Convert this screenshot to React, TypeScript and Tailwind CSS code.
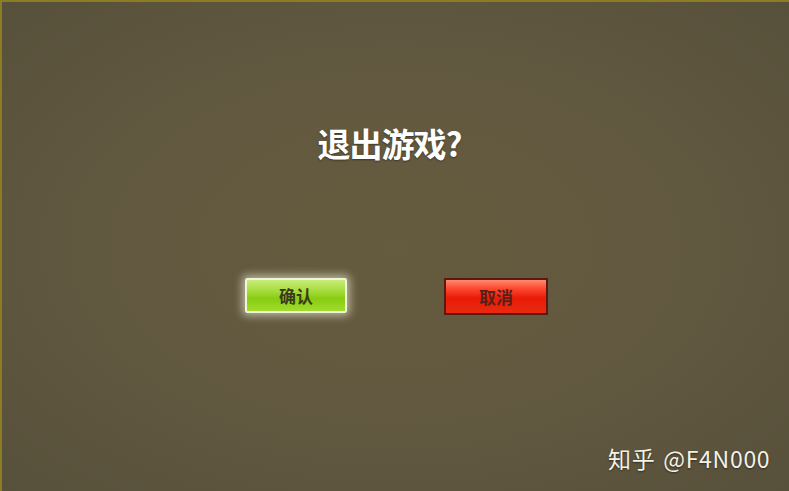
export default function App() {
  return (
    <div className="relative w-[789px] h-[491px] overflow-hidden border-t-2 border-l-2 border-[#8c7d22] bg-[radial-gradient(ellipse_at_center,#655b3e_0%,#615840_55%,#57503a_100%)] font-['Noto_Sans_CJK_SC',sans-serif]">
      <div className="flex flex-col items-center pt-[120px]">
        <h1 className="mr-[12px] text-[33px] leading-[42px] font-bold text-white tracking-[-1px] [text-shadow:0_1px_2px_rgba(0,0,0,0.4)]">
          退出游戏?
        </h1>
        <div className="mt-[114px] flex gap-[97px] pl-[2px]">
          <button className="w-[102px] h-[35px] rounded-[2px] border-2 border-[#eef5d8] bg-[linear-gradient(#c9ec7a_0%,#a6dc3c_35%,#88cc12_60%,#a1dc2c_100%)] shadow-[0_0_8px_3px_rgba(255,255,230,0.55)] text-[17px] font-bold text-[#3b3a1c] leading-none">
            确认
          </button>
          <button className="w-[104px] h-[37px] border-2 border-[#5a1a10] bg-[linear-gradient(#ff8a70_0%,#ff4a30_25%,#e81c08_55%,#e82a10_100%)] text-[17px] font-bold text-[#5a2018] leading-none">
            取消
          </button>
        </div>
      </div>
      <div className="absolute left-[606px] top-[439px] text-[23px] tracking-[0.7px] text-[#f4f1e6] [text-shadow:0_1px_2px_rgba(0,0,0,0.5)]">
        知乎 <span className="ml-[2px]">@F4N000</span>
      </div>
    </div>
  );
}
